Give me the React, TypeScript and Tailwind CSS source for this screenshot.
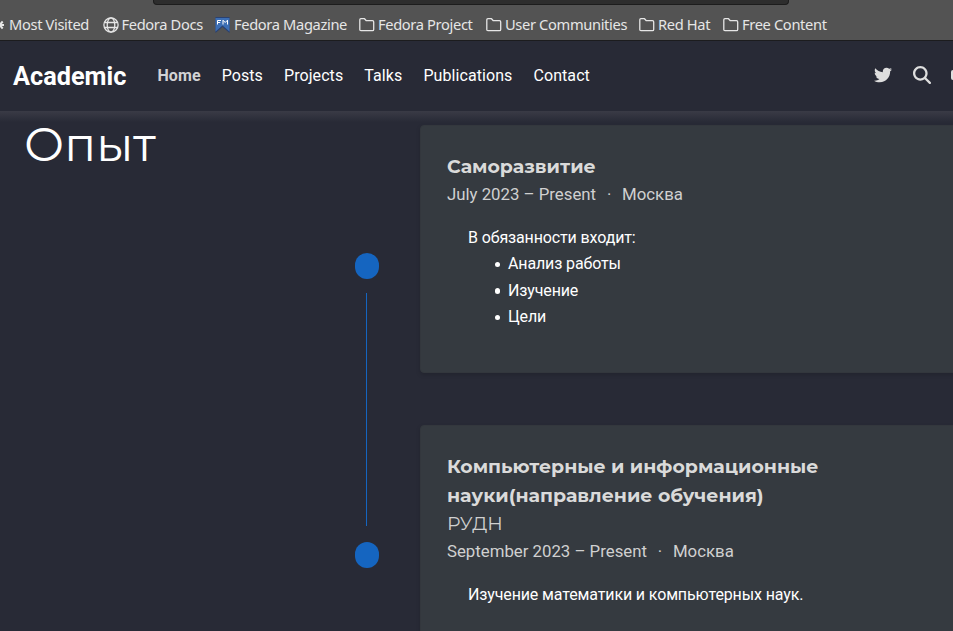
import type { ReactNode } from "react";
import { FaTwitter } from "react-icons/fa";
import { FaMagnifyingGlass } from "react-icons/fa6";

function FolderIcon() {
  return (
    <svg className="h-4 w-4 shrink-0" viewBox="0 0 16 16" fill="none" stroke="#e6e6e6" strokeWidth="1.3" strokeLinejoin="round">
      <path d="M.8 2.8q0-1.1 1.1-1.1h3.6l1.8 2h6.2q1.2 0 1.2 1.2v7.6q0 1.2-1.2 1.2H2q-1.2 0-1.2-1.2z" />
    </svg>
  );
}

function GlobeIcon() {
  return (
    <svg className="h-4 w-4 shrink-0" viewBox="0 0 16 16" fill="none" stroke="#e6e6e6" strokeWidth="1.3">
      <circle cx="8" cy="8" r="7.1" />
      <ellipse cx="8" cy="8" rx="3.8" ry="7.1" />
      <path d="M1.5 5.5h13M1.5 10.5h13" />
    </svg>
  );
}

function MagazineIcon() {
  return (
    <svg className="h-4 w-[15px] shrink-0" viewBox="0 0 15 16">
      <path d="M.5 0h14v16l-7-6-7 6z" fill="#294172" />
      <path d="M.5 1h14v13.5l-7-6-7 6z" fill="#3c6eb4" />
      <path d="M2.5 7.5V3.5H6M2.5 5.5h2.7M8 7.5V3.2l2.2 2.3 2.3-2.3V7.5" fill="none" stroke="#fff" strokeWidth="1" />
    </svg>
  );
}

function Bookmark({ icon, label, className }: { icon: ReactNode; label: string; className: string }) {
  return (
    <div className={`flex shrink-0 items-center ${className}`}>
      {icon}
      <span className="ml-[3px] pb-[2px] whitespace-nowrap">{label}</span>
    </div>
  );
}

function Timeline() {
  return (
    <div className="flex w-6 shrink-0 flex-col items-center pt-[142px]">
      <div className="h-[26px] w-6 rounded-full bg-[#1565c0]" />
      <div className="mt-[14px] mr-px h-[233px] w-px bg-[#1565c0]" />
      <div className="mt-4 h-[26px] w-6 rounded-full bg-[#1565c0]" />
    </div>
  );
}

function Card({ children, className }: { children: ReactNode; className: string }) {
  return (
    <article className={`w-[560px] shrink-0 rounded border border-[#33373d] bg-[#353a40] pt-[26px] pl-[26px] shadow-[0_2px_4px_rgba(0,0,0,0.15)] ${className}`}>
      {children}
    </article>
  );
}

function Meta({ date }: { date: string }) {
  return (
    <p className="flex h-7 items-center text-[16.8px] whitespace-nowrap text-[#d0d0d0]">
      <span>{date}</span>
      <span className="w-[26px] text-center">·</span>
      <span>Москва</span>
    </p>
  );
}

function Duty({ children }: { children: ReactNode }) {
  return (
    <li className="flex items-center gap-2">
      <span className="size-[5.5px] rounded-full bg-white" />
      {children}
    </li>
  );
}

const titleClass = "font-['Montserrat',sans-serif] text-[18.92px] leading-[29px] font-bold whitespace-nowrap text-[#dadada]";
const bodyClass = "mt-4 pl-[21px] text-base leading-[26.4px] tracking-[-0.13px]";

export default function App() {
  return (
    <div className="flex h-[631px] w-[953px] flex-col overflow-hidden bg-[#282a36] font-['Roboto',sans-serif] text-white">
      <div className="h-[41px] shrink-0 overflow-hidden border-b border-[#1c1c1e] bg-[#535353]">
        <div className="ml-[153px] h-[5px] w-[636px] rounded-b border border-t-0 border-[#1c1c1c] bg-[#2d2d2d]" />
        <div className="flex h-[39px] items-center font-['Noto_Sans',sans-serif] text-[14.67px] tracking-[-0.35px] text-[#e6e6e6]">
          <svg className="h-3 w-1 shrink-0" viewBox="0 0 4 12" fill="none" stroke="#e6e6e6" strokeWidth="2">
            <path d="M0 6h4M0 5.5l2.7-3M0 6.5l2.7 3" />
          </svg>
          <span className="ml-[5px] w-[93.5px] shrink-0 pb-[2px] whitespace-nowrap">Most Visited</span>
          <Bookmark className="w-[112.5px]" icon={<GlobeIcon />} label="Fedora Docs" />
          <Bookmark className="w-[144px] gap-px" icon={<MagazineIcon />} label="Fedora Magazine" />
          <Bookmark className="w-[127px]" icon={<FolderIcon />} label="Fedora Project" />
          <Bookmark className="w-[153px]" icon={<FolderIcon />} label="User Communities" />
          <Bookmark className="w-[84px]" icon={<FolderIcon />} label="Red Hat" />
          <Bookmark className="w-[110px]" icon={<FolderIcon />} label="Free Content" />
        </div>
      </div>

      <header className="flex h-[70px] shrink-0 items-center pl-[13px] text-base">
        <span className="w-[144.5px] pt-px text-[25.3px] font-bold">Academic</span>
        <nav className="flex grow gap-[21.1px] tracking-[0.07px]">
          <span className="font-bold text-[#d2d2d4]">Home</span>
          <span>Posts</span>
          <span>Projects</span>
          <span>Talks</span>
          <span>Publications</span>
          <span>Contact</span>
        </nav>
        <div className="flex shrink-0 items-center pb-[2px] text-[18px] text-[#dedede]">
          <FaTwitter className="mr-[21px]" />
          <FaMagnifyingGlass className="mr-[20.5px]" />
          <span className="h-[10px] w-[2px] rounded-l-full bg-[#dedede]" />
        </div>
      </header>

      <main className="flex grow overflow-hidden bg-[linear-gradient(to_bottom,#3a3b46_0px,#282a36_11px)]">
        <h1 className="w-[355px] shrink-0 pt-[5px] pl-[24px] font-['Montserrat',sans-serif] text-[47.3px] leading-[56px] font-normal">Опыт</h1>
        <Timeline />
        <div className="ml-[41px] flex shrink-0 flex-col pt-[14px]">
          <Card className="h-[248px]">
            <h2 className={titleClass}>Саморазвитие</h2>
            <Meta date="July 2023 – Present" />
            <div className={bodyClass}>
              <p>В обязанности входит:</p>
              <ul className="pl-[26.5px]">
                <Duty>Анализ работы</Duty>
                <Duty>Изучение</Duty>
                <Duty>Цели</Duty>
              </ul>
            </div>
          </Card>
          <Card className="mt-[52px] h-[248px]">
            <h2 className={titleClass}>
              Компьютерные и информационные
              <br />
              науки(направление обучения)
            </h2>
            <h3 className="font-['Montserrat',sans-serif] text-[18.9px] leading-7 font-normal text-[#d0d0d0]">РУДН</h3>
            <Meta date="September 2023 – Present" />
            <p className={bodyClass}>Изучение математики и компьютерных наук.</p>
          </Card>
        </div>
      </main>
    </div>
  );
}
